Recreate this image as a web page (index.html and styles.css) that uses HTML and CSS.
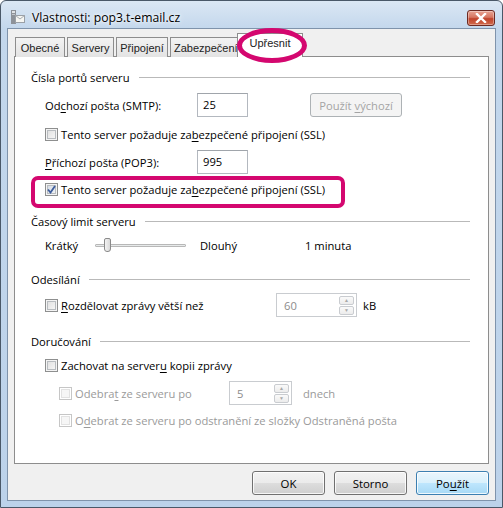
FILE: index.html
```html
<!DOCTYPE html>
<html lang="cs">
<head>
  <meta charset="UTF-8" />
  <title>Vlastnosti: pop3.t-email.cz</title>
  <link rel="stylesheet" href="styles.css">
</head>
<body>
  <div class="window">
    <div class="titlebar">
      <svg class="app-icon" width="16" height="16" viewBox="0 0 16 16">
        <rect x="1" y="1" width="5" height="14" fill="#8d9299" />
        <rect x="2" y="2" width="3" height="2" fill="#e0e3e6" />
        <rect x="2" y="5" width="3" height="1" fill="#c3c7cc" />
        <rect x="5.5" y="6.5" width="9" height="7" fill="#f6f6f2" stroke="#9aa0a6" stroke-width="1" />
        <path d="M5.5 6.5 L10 10 L14.5 6.5" fill="none" stroke="#a7acb2" stroke-width="1" />
      </svg>
      <span class="title">Vlastnosti: pop3.t-email.cz</span>
      <div class="close">
        <svg width="12" height="10" viewBox="0 0 12 10">
          <path d="M2 1 L10 9 M10 1 L2 9" stroke="#fff" stroke-width="2.4" stroke-linecap="square" />
        </svg>
      </div>
    </div>

    <div class="client">
      <div class="tabs">
        <div class="tab tab-general">Obecné</div>
        <div class="tab tab-servers">Servery</div>
        <div class="tab tab-connect">Připojení</div>
        <div class="tab tab-security">Zabezpečení</div>
        <div class="tab active">Upřesnit</div>
      </div>

      <div class="panel">
        <div class="group-head"><span>Čísla portů serveru</span></div>

        <div class="row row-field gap-7">
          <span class="field-label">Od<u>c</u>hozí pošta (SMTP):</span>
          <div class="textbox">25</div>
          <div class="btn btn-disabled btn-default"><span>Použít <u>v</u>ýchozí</span></div>
        </div>

        <div class="row gap-7">
          <span class="check"></span>
          <span>Tento server požaduje za<u>b</u>ezpečené připojení (SSL)</span>
        </div>

        <div class="row row-field gap-6">
          <span class="field-label"><u>P</u>říchozí pošta (POP3):</span>
          <div class="textbox">995</div>
        </div>

        <div class="row gap-5">
          <span class="check checked">
            <svg width="9" height="9" viewBox="0 0 9 9"><path d="M1 4.5 L3.5 7.5 L8 1" fill="none" stroke="#3d5d9c" stroke-width="1.8" /></svg>
          </span>
          <span>Tento server požaduje za<u>b</u>ezpečené připojení (SSL)</span>
        </div>

        <div class="group-head gap-13"><span>Časový limit serveru</span></div>

        <div class="row gap-5">
          <span class="slider-label">Krátký</span>
          <div class="slider">
            <div class="slider-track"></div>
            <div class="slider-thumb"></div>
          </div>
          <span class="slider-max">Dlouhý</span>
          <span>1 minuta</span>
        </div>

        <div class="group-head gap-15"><span>Odesílání</span></div>

        <div class="row row-field gap-5">
          <span class="check"></span>
          <span class="split-label"><u>R</u>ozdělovat zprávy větší než</span>
          <div class="spin spin-wide">
            <span class="spin-value">60</span>
            <div class="spin-buttons">
              <div class="spin-btn">&#9650;</div>
              <div class="spin-btn">&#9660;</div>
            </div>
          </div>
          <span class="unit">kB</span>
        </div>

        <div class="group-head gap-15"><span>Doručování</span></div>

        <div class="row gap-5">
          <span class="check"></span>
          <span>Zachovat na server<u>u</u> kopii zprávy</span>
        </div>

        <div class="row row-field sub gap-6 muted">
          <span class="check check-disabled"></span>
          <span class="days-label">Odebra<u>t</u> ze serveru po</span>
          <div class="spin spin-narrow">
            <span class="spin-value">5</span>
            <div class="spin-buttons">
              <div class="spin-btn">&#9650;</div>
              <div class="spin-btn">&#9660;</div>
            </div>
          </div>
          <span class="unit-days">dnech</span>
        </div>

        <div class="row sub gap-5 muted">
          <span class="check check-disabled"></span>
          <span>O<u>d</u>ebrat ze serveru po odstranění ze složky Odstraněná pošta</span>
        </div>
      </div>

      <div class="buttons">
        <div class="btn btn-dlg">OK</div>
        <div class="btn btn-dlg">Storno</div>
        <div class="btn btn-dlg btn-focus"><span>Po<u>u</u>žít</span></div>
      </div>
    </div>

    <div class="mark mark-tab"></div>
    <div class="mark mark-ssl"></div>
  </div>
</body>
</html>
```

FILE: styles.css
```css
:root {
  --text: #000;
  --muted: #9a9a9a;
  --line: #b9b9b9;
  --mark: #d4076f;
}

* {
  box-sizing: border-box;
}

body {
  margin: 0;
  background: #fff;
  font-family: "Open Sans", "Noto Sans", sans-serif;
  font-size: 11.2px;
  color: var(--text);
}

u {
  text-decoration-thickness: 1px;
  text-underline-offset: 2px;
}

.window {
  position: relative;
  width: 503px;
  height: 508px;
  border: 1px solid #4a5868;
  border-radius: 6px 6px 0 0;
  background: linear-gradient(#dbe7f4 0, #c3d7ec 28px, #bcd2ea 100%);
  padding: 0 6px 6px 6px;
  display: flex;
  flex-direction: column;
}

/* title bar */
.titlebar {
  height: 27px;
  display: flex;
  align-items: center;
  padding-left: 3px;
}

.app-icon {
  flex: none;
  margin-right: 6px;
  margin-top: 4px;
}

.title {
  font-size: 12.2px;
  margin-top: 5px;
  flex: 1;
  text-shadow: 0 0 6px #fff, 0 0 3px #fff;
}

.close {
  width: 28px;
  height: 16px;
  margin-top: 6px;
  margin-right: 1px;
  border: 1px solid #6d2a22;
  border-radius: 3px;
  background: linear-gradient(#e8a493 0, #d67560 45%, #c0432b 55%, #d16b4d 100%);
  display: flex;
  align-items: center;
  justify-content: center;
  box-shadow: inset 0 0 0 1px rgba(255, 255, 255, 0.35);
}

/* client area */
.client {
  flex: 1;
  background: #f0f0f0;
  border: 1px solid #7f93ab;
  padding: 0 6px;
  display: flex;
  flex-direction: column;
}

.tabs {
  height: 28px;
  display: flex;
  align-items: flex-end;
  padding-left: 1px;
  position: relative;
  z-index: 1;
  margin-bottom: -1px;
}

.tab {
  height: 20px;
  margin-right: 2px;
  border: 1px solid #8d8d8d;
  border-bottom: none;
  background: linear-gradient(#f3f3f3, #e3e3e3);
  font-family: "Liberation Sans", sans-serif;
  font-size: 11px;
  display: flex;
  align-items: center;
  justify-content: center;
  white-space: nowrap;
  color: #222;
}

.tab-general { width: 50px; }
.tab-servers { width: 47px; }
.tab-connect { width: 52px; }
.tab-security { width: 68px; justify-content: flex-start; padding-left: 3px; }

.tab.active {
  width: 66px;
  height: 24px;
  margin-left: -3px;
  background: #fff;
  align-items: flex-start;
  padding-top: 3px;
  position: relative;
}

.panel {
  height: 408px;
  background: #fff;
  border: 1px solid #8d8d8d;
  padding: 11px 18px 0 16px;
  display: flex;
  flex-direction: column;
}

.group-head {
  height: 18px;
  display: flex;
  align-items: center;
}

.group-head::after {
  content: "";
  flex: 1;
  height: 1px;
  background: var(--line);
  margin-left: 9px;
}

.row {
  height: 20px;
  display: flex;
  align-items: center;
  padding-left: 14px;
  white-space: nowrap;
}

.row-field {
  height: 24px;
}

.row.sub {
  padding-left: 28px;
}

.gap-5 { margin-top: 5px; }
.gap-6 { margin-top: 6px; }
.gap-7 { margin-top: 7px; }
.gap-13 { margin-top: 13px; }
.gap-15 { margin-top: 15px; }

.muted {
  color: var(--muted);
}

.field-label {
  width: 152px;
}

.textbox {
  width: 51px;
  height: 24px;
  border: 1px solid #b3b8bf;
  border-top-color: #a0a5ab;
  background: #fff;
  padding: 3px 0 0 5px;
}

.btn {
  height: 24px;
  border: 1px solid #707070;
  border-radius: 3px;
  display: flex;
  align-items: center;
  justify-content: center;
  white-space: pre;
  background: linear-gradient(#f2f2f2 0, #ebebeb 50%, #dddddd 51%, #cfcfcf 100%);
  box-shadow: inset 0 0 0 1px rgba(255, 255, 255, 0.8);
}

.btn-default {
  width: 92px;
  margin-left: 62px;
}

.btn-disabled {
  border-color: #adb2b5;
  background: #f4f4f4;
  color: #a4a4a4;
  box-shadow: none;
}

/* checkbox */
.check {
  width: 13px;
  height: 13px;
  margin-right: 3px;
  border: 1px solid #8e8f8f;
  background: linear-gradient(135deg, #dcdcdc, #fbfbfb);
  box-shadow: inset 0 0 0 1px #f4f4f4, inset 0 0 0 2px #b8bcc0;
  display: flex;
  align-items: center;
  justify-content: center;
  flex: none;
}

.check.checked {
  background: linear-gradient(135deg, #cfd6e0, #f7f9fb);
}

.check-disabled {
  border-color: #c6c6c6;
  background: #f6f6f6;
  box-shadow: inset 0 0 0 1px #fff, inset 0 0 0 2px #e2e2e2;
}

/* slider */
.slider-label {
  width: 50px;
}

.slider {
  position: relative;
  width: 91px;
  height: 16px;
  display: flex;
  align-items: center;
}

.slider-track {
  width: 100%;
  height: 3px;
  border: 1px solid #b8b8b8;
  border-radius: 1px;
  background: #e7eaea;
}

.slider-thumb {
  position: absolute;
  left: 9px;
  top: 1px;
  width: 7px;
  height: 14px;
  border: 1px solid #8a8a8a;
  border-radius: 2px 2px 3px 3px;
  background: linear-gradient(90deg, #f3f3f3, #d9d9d9);
}

.slider-max {
  width: 105px;
  margin-left: 14px;
}

/* spinners */
.split-label {
  width: 215px;
}

.days-label {
  width: 154px;
}

.spin {
  height: 24px;
  border: 1px solid #c9ccd0;
  background: #fff;
  display: flex;
  align-items: center;
  justify-content: space-between;
  padding: 0 2px 0 7px;
  color: #8c8c8c;
}

.spin-wide {
  width: 81px;
}

.spin-narrow {
  width: 63px;
}

.spin-buttons {
  display: flex;
  flex-direction: column;
  gap: 1px;
}

.spin-btn {
  width: 15px;
  height: 9px;
  border: 1px solid #c9ccd0;
  border-radius: 2px;
  background: linear-gradient(#fafafa, #ececec);
  font-size: 5px;
  line-height: 7px;
  text-align: center;
  color: #a8a8a8;
}

.unit {
  margin-left: 6px;
}

.unit-days {
  margin-left: 11px;
}

/* dialog buttons */
.buttons {
  display: flex;
  justify-content: flex-end;
  gap: 9px;
  margin-top: 7px;
}

.btn-dlg {
  width: 73px;
  font-size: 11.4px;
}

.btn-focus {
  border-color: #3c7fb1;
  background: linear-gradient(#eaf6fd 0, #d9f0fc 50%, #bee6fd 51%, #a7d9f5 100%);
}

/* highlight marks drawn over the screenshot */
.mark {
  position: absolute;
  z-index: 5;
  border: 4px solid var(--mark);
  pointer-events: none;
}

.mark-tab {
  left: 236px;
  top: 27px;
  width: 70px;
  height: 35px;
  border-width: 5px;
  border-radius: 50%;
}

.mark-ssl {
  left: 30px;
  top: 175px;
  width: 314px;
  height: 32px;
  border-radius: 7px;
}
```
